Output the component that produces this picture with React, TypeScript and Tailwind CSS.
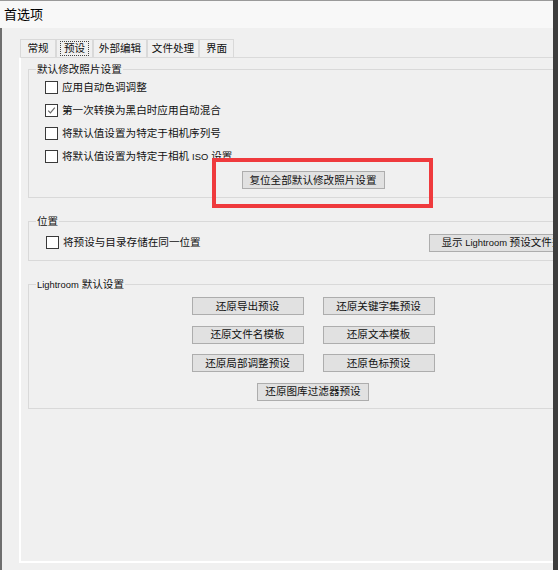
import React from "react";
import clsx from "clsx";

function CheckBox({ checked = false }: { checked?: boolean }) {
  return (
    <span className="flex h-[13px] w-[13px] shrink-0 items-center justify-center border border-[#3a3a3a] bg-white">
      {checked && (
        <svg width="9" height="9" viewBox="0 0 9 9">
          <path d="M1.2 4.6 L3.4 6.9 L7.8 1.6" fill="none" stroke="#6a6a6a" strokeWidth="1.2" />
        </svg>
      )}
    </span>
  );
}

function CheckRow({ checked, children }: { checked?: boolean; children: React.ReactNode }) {
  return (
    <div className="flex h-[23px] items-center gap-[4px]">
      <CheckBox checked={checked} />
      <span className="leading-none">{children}</span>
    </div>
  );
}

function Btn({ className, children }: { className?: string; children: React.ReactNode }) {
  return (
    <button
      type="button"
      className={clsx(
        "flex h-[18px] shrink-0 items-center justify-center whitespace-nowrap border border-[#adadad] bg-[#e1e1e1] leading-none text-[#111]",
        className
      )}
    >
      {children}
    </button>
  );
}

function Latin({ children }: { children: React.ReactNode }) {
  return <span className="text-[9.4px]">{children}</span>;
}

function Group({
  title,
  className,
  children,
}: {
  title: React.ReactNode;
  className?: string;
  children: React.ReactNode;
}) {
  return (
    <fieldset className="w-[570px] border border-[#d9d9d9]">
      <legend className="ml-[7px] px-[1px] text-[10.6px] leading-[14px]">{title}</legend>
      <div className={className}>{children}</div>
    </fieldset>
  );
}

const tabs = ["常规", "预设", "外部编辑", "文件处理", "界面"];
const tabWidths = ["w-[36px]", "w-[37px]", "w-[54px]", "w-[52px]", "w-[35px]"];

export default function App() {
  return (
    <div className="flex h-[570px] w-[558px] overflow-hidden bg-[#f0f0f0] font-['Liberation_Sans','Noto_Sans_CJK_SC',sans-serif] text-[10.6px] text-[#111]">
      <div className="flex min-w-0 flex-1 flex-col">
        {/* title bar */}
        <div className="flex h-[28px] shrink-0 items-center border-t border-[#9a9a9a] bg-[#f8f8f8] pl-[4px] text-[13px] text-black">
          首选项
        </div>

        <div className="flex flex-1 flex-col overflow-hidden border-l-2 border-[#6e6e6e] pl-[17px] pt-[11px]">
          {/* tab strip */}
          <div className="ml-[1px] flex h-[18px] shrink-0 items-end">
            {tabs.map((t, i) => (
              <div
                key={t}
                className={clsx(
                  "flex h-[18px] items-center justify-center border-l border-r border-t border-[#d9d9d9] bg-[#f0f0f0]",
                  tabWidths[i]
                )}
              >
                {i === 1 ? (
                  <span className="border border-dotted border-[#444] px-[3px] py-[1px] leading-none">{t}</span>
                ) : (
                  <span className="leading-none">{t}</span>
                )}
              </div>
            ))}
          </div>

          {/* tab page */}
          <div className="relative h-[506px] w-[592px] shrink-0 border-b-2 border-l-2 border-t border-b-white border-l-white border-t-[#dadada] pl-[7px] pt-[4px]">
            <div className="flex flex-col gap-[16px]">
              <Group title="默认修改照片设置" className="pb-[8px] pl-[16px]">
                <CheckRow>应用自动色调调整</CheckRow>
                <CheckRow checked>第一次转换为黑白时应用自动混合</CheckRow>
                <CheckRow>将默认值设置为特定于相机序列号</CheckRow>
                <CheckRow>
                  将默认值设置为特定于相机 <Latin>ISO</Latin> 设置
                </CheckRow>
                <div className="mt-[3px] flex justify-center pr-[16px]">
                  <Btn className="w-[143px]">复位全部默认修改照片设置</Btn>
                </div>
              </Group>

              <Group title="位置" className="pb-[6px] pl-[17px] pr-[22px] pt-[3px]">
                <div className="flex items-center justify-between">
                  <CheckRow>将预设与目录存储在同一位置</CheckRow>
                  <Btn className="w-[146px]">
                    显示 <Latin>&nbsp;Lightroom&nbsp;</Latin> 预设文件夹
                  </Btn>
                </div>
              </Group>

              <Group
                title={
                  <>
                    <Latin>Lightroom</Latin> 默认设置
                  </>
                }
                className="pb-[7px] pt-[5px]"
              >
                <div className="flex flex-col items-center gap-y-[10.5px]">
                  <div className="grid grid-cols-[112px_112px] gap-x-[19px] gap-y-[10.5px]">
                    <Btn>还原导出预设</Btn>
                    <Btn>还原关键字集预设</Btn>
                    <Btn>还原文件名模板</Btn>
                    <Btn>还原文本模板</Btn>
                    <Btn>还原局部调整预设</Btn>
                    <Btn>还原色标预设</Btn>
                  </div>
                  <Btn className="w-[112px]">还原图库过滤器预设</Btn>
                </div>
              </Group>
            </div>

            {/* red highlight frame around the reset button */}
            <div className="pointer-events-none absolute left-[191px] top-[100px] h-[50px] w-[221px] border-[4px] border-[#ef3a3d]" />
          </div>
        </div>
      </div>
      <div className="w-[5px] shrink-0 bg-[#3d3d3d]" />
    </div>
  );
}
